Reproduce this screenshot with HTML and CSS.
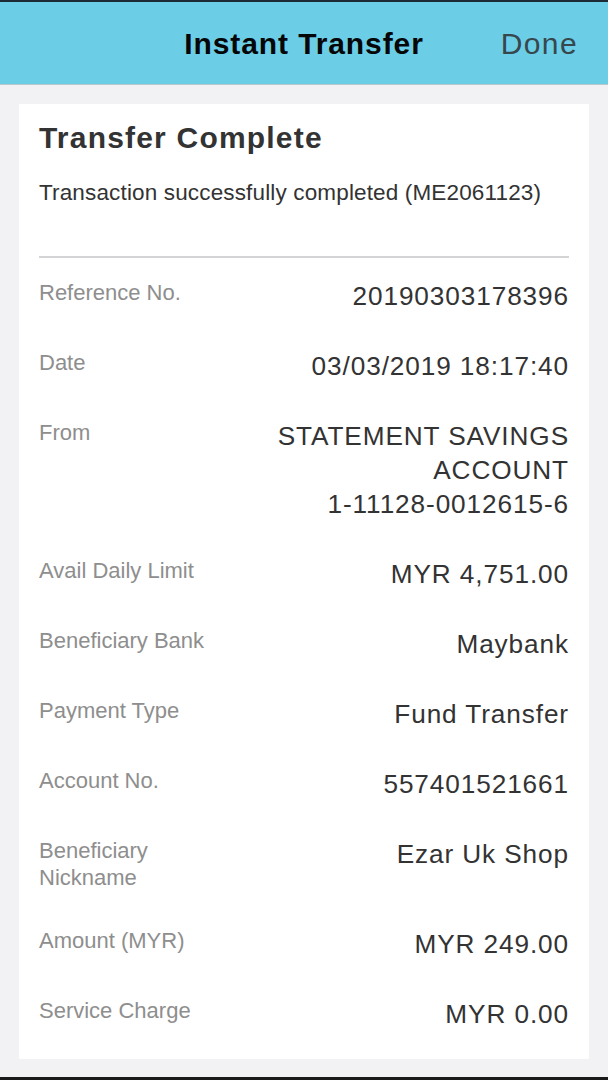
FILE: index.html
```html
<!DOCTYPE html>
<html>
<head>
<meta charset="utf-8">
<link rel="stylesheet" href="styles.css">
</head>
<body>
<div class="topline"></div>
<header class="navbar">
  <div class="nav-spacer"></div>
  <h1 class="nav-title">Instant Transfer</h1>
  <div class="nav-action">Done</div>
</header>
<main class="content">
  <section class="card">
    <h2 class="card-title">Transfer Complete</h2>
    <p class="card-sub">Transaction successfully completed (ME2061123)</p>
    <div class="divider"></div>
    <div class="rows">
      <div class="row"><div class="label">Reference No.</div><div class="value">20190303178396</div></div>
      <div class="row"><div class="label">Date</div><div class="value">03/03/2019 18:17:40</div></div>
      <div class="row"><div class="label">From</div><div class="value">STATEMENT SAVINGS<br>ACCOUNT<br>1-11128-0012615-6</div></div>
      <div class="row"><div class="label">Avail Daily Limit</div><div class="value">MYR 4,751.00</div></div>
      <div class="row"><div class="label">Beneficiary Bank</div><div class="value">Maybank</div></div>
      <div class="row"><div class="label">Payment Type</div><div class="value">Fund Transfer</div></div>
      <div class="row"><div class="label">Account No.</div><div class="value">557401521661</div></div>
      <div class="row"><div class="label">Beneficiary<br>Nickname</div><div class="value">Ezar Uk Shop</div></div>
      <div class="row"><div class="label">Amount (MYR)</div><div class="value">MYR 249.00</div></div>
      <div class="row"><div class="label">Service Charge</div><div class="value">MYR 0.00</div></div>
    </div>
  </section>
</main>
<div class="bottomline"></div>
</body>
</html>
```

FILE: styles.css
```css
* { box-sizing: border-box; }
html, body {
  margin: 0;
  padding: 0;
}
body {
  width: 608px;
  height: 1080px;
  background: #f2f1f3;
  font-family: "Liberation Sans", Arial, sans-serif;
  display: flex;
  flex-direction: column;
  overflow: hidden;
}
.topline {
  height: 2px;
  background: #1d2b36;
  flex: none;
}
.navbar {
  flex: none;
  height: 83px;
  background: #6ccde6;
  border-bottom: 1px solid #b9c9cd;
  display: grid;
  grid-template-columns: 1fr auto 1fr;
  align-items: center;
  padding: 2px 30px 0;
}
.nav-title {
  margin: 0;
  font-size: 30px;
  font-weight: bold;
  color: #050607;
  letter-spacing: 0.9px;
}
.nav-action {
  justify-self: end;
  font-size: 30px;
  color: #36474d;
  letter-spacing: 1.4px;
}
.content {
  flex: 1;
  padding: 19px 19px 0;
}
.card {
  background: #ffffff;
  padding: 12px 20px 13px;
}
.card-title {
  margin: 0;
  font-size: 30px;
  font-weight: bold;
  color: #333333;
  line-height: 44px;
  letter-spacing: 1.2px;
}
.card-sub {
  margin: 19px 0 0;
  font-size: 22.5px;
  color: #333333;
  line-height: 28px;
  letter-spacing: 0.15px;
}
.divider {
  height: 2px;
  background: #d4d4d6;
  margin-top: 49px;
}
.rows {
  display: flex;
  flex-direction: column;
}
.row {
  display: flex;
  justify-content: space-between;
  align-items: flex-start;
  padding: 21px 0 15px;
}
.label {
  font-size: 22px;
  line-height: 27px;
  color: #8e8e8e;
}
.value {
  font-size: 26.2px;
  line-height: 34px;
  color: #333333;
  text-align: right;
  letter-spacing: 0.9px;
}
.bottomline {
  flex: none;
  height: 3px;
  background: #1a1a1a;
}
```
